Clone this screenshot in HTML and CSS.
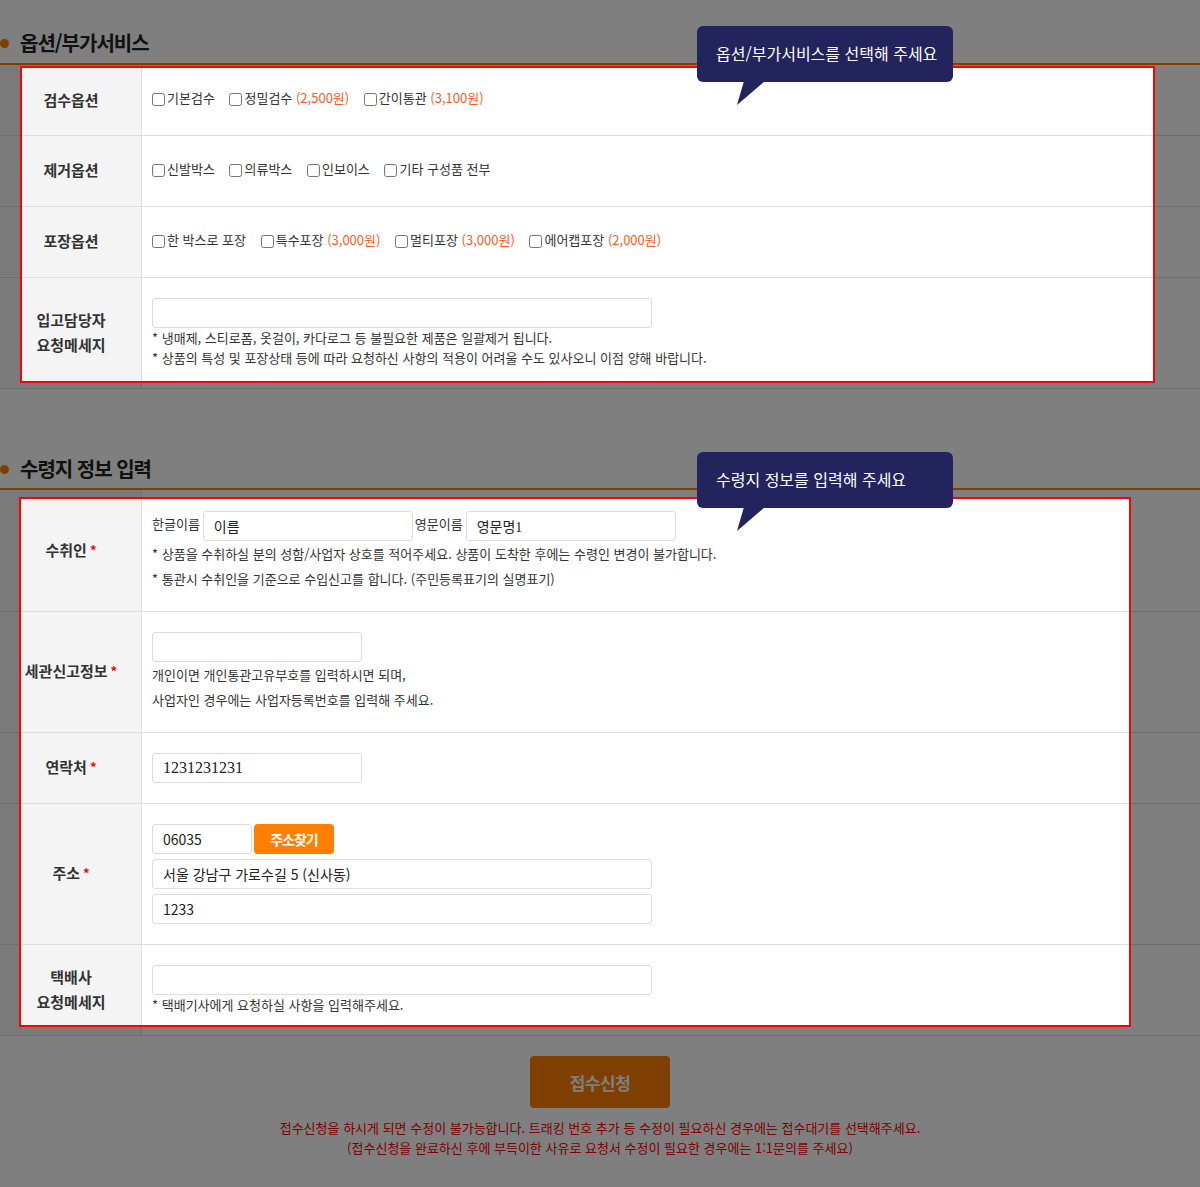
FILE: index.html
```html
<!DOCTYPE html>
<html lang="ko">
<head>
    <meta charset="UTF-8">
    <meta name="viewport" content="width=device-width, initial-scale=1.0">
    <title>배송대행 신청서</title>
    <link rel="stylesheet" href="styles.css">
</head>
<body>

<div class="page">
    <!-- 옵션/부가서비스 -->
    <div class="sec sec-option">
        <h3 class="sec-title"><span class="dot"></span>옵션/부가서비스</h3>
        <div class="board board-option">
            <div class="hl">
                <div class="row">
                    <div class="th">검수옵션</div>
                    <div class="td opts first">
                        <label><input type="checkbox">기본검수</label>
                        <label><input type="checkbox">정밀검수 <em>(2,500원)</em></label>
                        <label><input type="checkbox">간이통관 <em>(3,100원)</em></label>
                    </div>
                </div>
                <div class="row">
                    <div class="th">제거옵션</div>
                    <div class="td opts">
                        <label><input type="checkbox">신발박스</label>
                        <label><input type="checkbox">의류박스</label>
                        <label><input type="checkbox">인보이스</label>
                        <label><input type="checkbox">기타 구성품 전부</label>
                    </div>
                </div>
                <div class="row">
                    <div class="th">포장옵션</div>
                    <div class="td opts">
                        <label><input type="checkbox">한 박스로 포장</label>
                        <label><input type="checkbox">특수포장 <em>(3,000원)</em></label>
                        <label><input type="checkbox">멀티포장 <em>(3,000원)</em></label>
                        <label><input type="checkbox">에어캡포장 <em>(2,000원)</em></label>
                    </div>
                </div>
                <div class="row">
                    <div class="th th-low">입고담당자<br>요청메세지</div>
                    <div class="td td-memo">
                        <input type="text" class="in w500">
                        <p class="note">* 냉매제, 스티로폼, 옷걸이, 카다로그 등 불필요한 제품은 일괄제거 됩니다.</p>
                        <p class="note">* 상품의 특성 및 포장상태 등에 따라 요청하신 사항의 적용이 어려울 수도 있사오니 이점 양해 바랍니다.</p>
                    </div>
                </div>
            </div>
        </div>
        <div class="tip tip-option">옵션/부가서비스를 선택해 주세요</div>
    </div>

    <!-- 수령지 정보 입력 -->
    <div class="sec sec-recv">
        <h3 class="sec-title"><span class="dot"></span>수령지 정보 입력</h3>
        <div class="board board-recv">
            <div class="hl">
                <div class="row">
                    <div class="th th-up">수취인 <span class="req">*</span></div>
                    <div class="td td-name">
                        <div class="name-line">
                            <span>한글이름</span>
                            <input type="text" class="in serif name w210" value="이름">
                            <span>영문이름</span>
                            <input type="text" class="in serif name w210" value="영문명1">
                        </div>
                        <p class="note tall">* 상품을 수취하실 분의 성함/사업자 상호를 적어주세요. 상품이 도착한 후에는 수령인 변경이 불가합니다.</p>
                        <p class="note tall">* 통관시 수취인을 기준으로 수입신고를 합니다. (주민등록표기의 실명표기)</p>
                    </div>
                </div>
                <div class="row">
                    <div class="th">세관신고정보 <span class="req">*</span></div>
                    <div class="td">
                        <input type="text" class="in w210">
                        <p class="note tall">개인이면 개인통관고유부호를 입력하시면 되며,</p>
                        <p class="note tall">사업자인 경우에는 사업자등록번호를 입력해 주세요.</p>
                    </div>
                </div>
                <div class="row">
                    <div class="th">연락처 <span class="req">*</span></div>
                    <div class="td">
                        <input type="text" class="in serif w210" value="1231231231">
                    </div>
                </div>
                <div class="row">
                    <div class="th">주소 <span class="req">*</span></div>
                    <div class="td">
                        <div class="zip-line">
                            <input type="text" class="in w100" value="06035">
                            <button type="button" class="btn-zip">주소찾기</button>
                        </div>
                        <input type="text" class="in w500 addr" value="서울 강남구 가로수길 5 (신사동)">
                        <input type="text" class="in w500 addr" value="1233">
                    </div>
                </div>
                <div class="row">
                    <div class="th th-low">택배사<br>요청메세지</div>
                    <div class="td td-last">
                        <input type="text" class="in w500">
                        <p class="note">* 택배기사에게 요청하실 사항을 입력해주세요.</p>
                    </div>
                </div>
            </div>
        </div>
        <div class="tip tip-recv">수령지 정보를 입력해 주세요</div>
    </div>

    <div class="submit-wrap">
        <button type="button" class="btn-submit">접수신청</button>
        <p class="warn">접수신청을 하시게 되면 수정이 불가능합니다. 트래킹 번호 추가 등 수정이 필요하신 경우에는 접수대기를 선택해주세요.<br>
        (접수신청을 완료하신 후에 부득이한 사유로 요청서 수정이 필요한 경우에는 1:1문의를 주세요)</p>
    </div>
</div>

<!-- 가이드 딤 처리 -->
<div class="dim"></div>

</body>
</html>
```

FILE: styles.css
```css
* {
    box-sizing: border-box;
}
body {
    margin: 0;
    font-family: "Noto Sans CJK KR", "Noto Sans", sans-serif;
    font-size: 13px;
    color: #333;
    background-color: #fff;
}
.dim {
    position: fixed;
    inset: 0;
    background-color: rgba(0, 0, 0, 0.5);
    z-index: 5;
}
.sec {
    position: relative;
}
.sec-title {
    display: flex;
    align-items: center;
    margin: 0;
    padding: 28px 0 5px;
    font-size: 20px;
    font-weight: bold;
    letter-spacing: -1px;
    line-height: 30px;
    color: #222;
    border-bottom: 2px solid #ff7f00;
}
.sec-recv .sec-title {
    padding: 65px 0 4px;
}
.dot {
    width: 9px;
    height: 9px;
    margin-right: 11px;
    border-radius: 50%;
    background-color: #ff7f00;
}

/* 테이블 배경 (딤 아래 보이는 원래 행) */
.board {
    border-bottom: 1px solid #ddd;
}
.board-option {
    padding: 1px 45px 5px 20px;
    background:
        linear-gradient(#ddd, #ddd) 0 70px / 100% 1px no-repeat,
        linear-gradient(#ddd, #ddd) 0 141px / 100% 1px no-repeat,
        linear-gradient(#ddd, #ddd) 0 212px / 100% 1px no-repeat,
        linear-gradient(#ddd, #ddd) 141px 0 / 1px 100% no-repeat,
        linear-gradient(to right, #f4f4f4 141px, #fff 141px);
}
.board-recv {
    padding: 7px 69px 8px 19px;
    background:
        linear-gradient(#ddd, #ddd) 0 121px / 100% 1px no-repeat,
        linear-gradient(#ddd, #ddd) 0 242px / 100% 1px no-repeat,
        linear-gradient(#ddd, #ddd) 0 313px / 100% 1px no-repeat,
        linear-gradient(#ddd, #ddd) 0 454px / 100% 1px no-repeat,
        linear-gradient(#ddd, #ddd) 141px 0 / 1px 100% no-repeat,
        linear-gradient(to right, #f4f4f4 141px, #fff 141px);
}

/* 하이라이트 박스 */
.hl {
    position: relative;
    z-index: 10;
    background-color: #fff;
    border: 2px solid #f00;
}
.row {
    display: grid;
    grid-template-columns: 120px 1fr;
    border-bottom: 1px solid #ddd;
}
.row:last-child {
    border-bottom: 0;
}
.board-recv .row {
    grid-template-columns: 121px 1fr;
}
.th {
    display: flex;
    align-items: center;
    justify-content: center;
    padding: 0 21px 4px 0;
    background-color: #f4f4f4;
    border-right: 1px solid #ddd;
    font-size: 15px;
    font-weight: bold;
    line-height: 25px;
    text-align: center;
}
.board-recv .th {
    padding-right: 20px;
}
.th-low {
    padding-top: 8px;
}
.board-recv .th-low {
    padding-top: 12px;
}
.board-recv .th-up {
    padding-bottom: 12px;
}
.req {
    margin-left: 3px;
    color: #f00;
    font-size: 13px;
}
.td {
    padding: 20px 10px;
    line-height: 20px;
}
.opts {
    padding: 20px 10px 24px;
    line-height: 26px;
}
.opts.first {
    padding-top: 17px;
}
.opts label {
    margin-right: 11px;
    white-space: nowrap;
}
.opts input {
    width: 13px;
    height: 13px;
    margin: 0 2px 0 0;
    vertical-align: middle;
}
.opts em {
    font-style: normal;
    color: #ff5b1b;
}
.td-memo {
    padding-bottom: 13px;
}
.td-name {
    padding-top: 12px;
}
.td-last {
    padding-bottom: 10px;
}
.note {
    margin: 0;
    line-height: 20px;
}
.note.tall {
    line-height: 25px;
}

/* 입력 */
.in {
    display: block;
    height: 30px;
    padding: 0 10px;
    border: 1px solid #ddd;
    border-radius: 3px;
    background-color: #fff;
    font-family: "Noto Sans CJK KR", "Noto Sans", sans-serif;
    font-size: 14px;
    color: #222;
}
.serif {
    font-family: "Liberation Serif", "Noto Sans CJK KR", serif;
    font-size: 16px;
}
.serif.name {
    font-size: 14px;
}
.w500 {
    width: 500px;
}
.w210 {
    width: 210px;
}
.w100 {
    width: 100px;
}
.name-line {
    display: flex;
    align-items: flex-start;
}
.name-line span {
    margin-right: 3px;
    line-height: 25px;
}
.name-line input {
    margin-right: 2px;
}
.zip-line {
    display: flex;
    gap: 2px;
}
.btn-zip {
    width: 80px;
    height: 30px;
    border: 0;
    border-radius: 4px;
    background-color: #ff7f00;
    color: #fff;
    font-family: "Noto Sans CJK KR", sans-serif;
    font-size: 14px;
    font-weight: bold;
    letter-spacing: -1px;
    cursor: pointer;
}
.addr {
    margin-top: 5px;
}

/* 접수 버튼 */
.submit-wrap {
    padding: 20px 0 30px;
    text-align: center;
}
.btn-submit {
    display: block;
    width: 140px;
    height: 52px;
    margin: 0 auto;
    border: 0;
    border-radius: 4px;
    background-color: #ff7f00;
    color: #fff;
    font-family: "Noto Sans CJK KR", sans-serif;
    font-size: 17px;
    font-weight: bold;
    letter-spacing: -0.5px;
    cursor: pointer;
}
.warn {
    margin: 10px 0 0;
    line-height: 20px;
    color: #f00;
}

/* 가이드 말풍선 */
.tip {
    position: absolute;
    left: 697px;
    width: 256px;
    height: 56px;
    padding-left: 19px;
    border-radius: 6px;
    background-color: #23235e;
    color: #fff;
    font-size: 16px;
    line-height: 55px;
    z-index: 20;
}
.tip::after {
    content: "";
    position: absolute;
    left: 40px;
    top: 55px;
    width: 28px;
    height: 24px;
    background-color: #23235e;
    clip-path: polygon(7px 0, 28px 0, 0 100%);
}
.tip-option {
    top: 26px;
}
.tip-recv {
    top: 63px;
}
```
